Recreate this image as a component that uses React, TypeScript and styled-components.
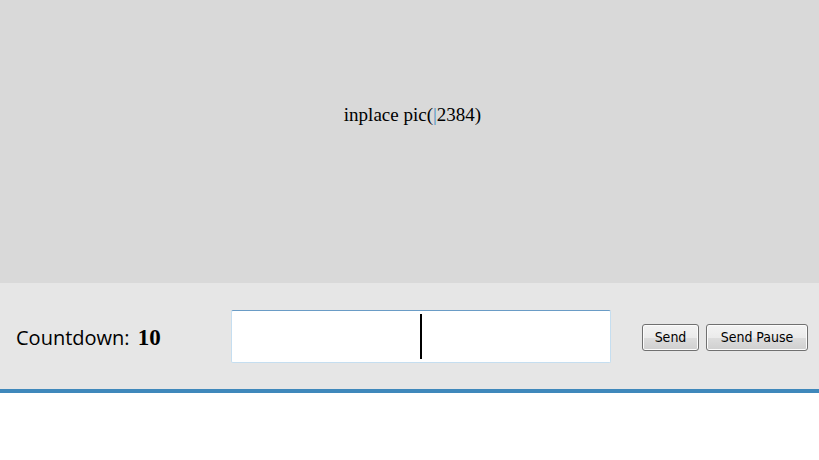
import styled, { createGlobalStyle } from 'styled-components';

const Global = createGlobalStyle`
  html, body {
    margin: 0;
    padding: 0;
    background: #ffffff;
  }
`;

const Page = styled.div`
  display: flex;
  flex-direction: column;
  width: 819px;
  height: 460px;
`;

const Picture = styled.div`
  display: flex;
  justify-content: center;
  align-items: flex-start;
  height: 283px;
  padding: 104px 0 0 6px;
  box-sizing: border-box;
  background: #d9d9d9;
  font-family: 'Liberation Serif', 'Times New Roman', serif;
  font-size: 19px;
  color: #000;
`;

const Caret = styled.span`
  color: #4a8cc0;
`;

const Bar = styled.div`
  display: flex;
  align-items: center;
  height: 110px;
  box-sizing: border-box;
  padding: 0 11px 0 16px;
  background: #e6e6e6;
  border-bottom: 4px solid #3f88bb;
`;

const Countdown = styled.div`
  width: 215px;
  flex-shrink: 0;
  font-family: 'Open Sans', 'Noto Sans', sans-serif;
  font-size: 20px;
  color: #000;
  padding-top: 2px;

  b {
    font-family: 'Liberation Serif', serif;
    font-size: 23px;
    margin-left: 3px;
  }
`;

const Field = styled.div`
  display: flex;
  justify-content: center;
  align-items: center;
  width: 380px;
  height: 53px;
  box-sizing: border-box;
  background: #fff;
  border: 1px solid #c5def0;
  border-top-color: #6a9cc6;
  border-radius: 2px;
`;

const Cursor = styled.div`
  width: 2px;
  height: 45px;
  background: #000;
`;

const Buttons = styled.div`
  display: flex;
  gap: 7px;
  margin-left: auto;
  margin-top: 2px;
`;

const Button = styled.button<{ $w: number }>`
  width: ${(p) => p.$w}px;
  height: 27px;
  padding: 0;
  font-family: 'DejaVu Sans Condensed', 'DejaVu Sans', sans-serif;
  font-size: 14px;
  color: #000;
  background: linear-gradient(#f3f3f3 0%, #ebebeb 50%, #dddddd 51%, #cfcfcf 100%);
  border: 1px solid #707070;
  border-radius: 3px;
  box-shadow: inset 0 0 0 1px #fcfcfc;
`;

export default function App() {
  return (
    <Page>
      <Global />
      <Picture>
        <span>
          inplace pic(<Caret>|</Caret>2384)
        </span>
      </Picture>
      <Bar>
        <Countdown>
          Countdown: <b>10</b>
        </Countdown>
        <Field>
          <Cursor />
        </Field>
        <Buttons>
          <Button $w={57}>Send</Button>
          <Button $w={102}>Send Pause</Button>
        </Buttons>
      </Bar>
    </Page>
  );
}
